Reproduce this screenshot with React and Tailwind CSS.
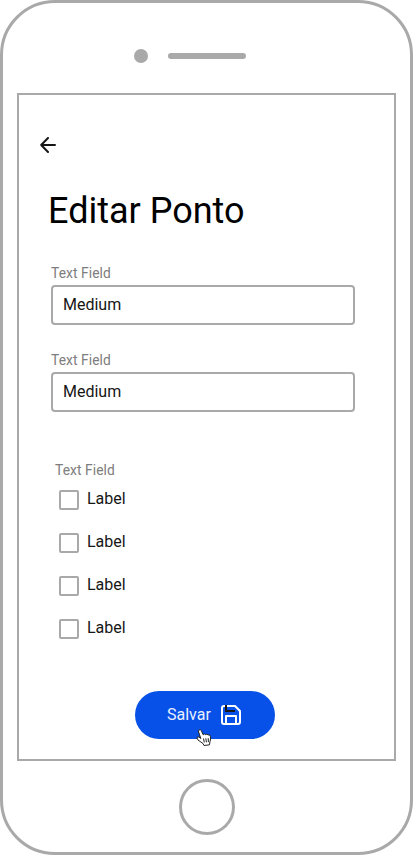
const Field = ({ label, value }) => (
  <div className="flex w-[304px] flex-col">
    <label className="h-5 text-[13.8px] leading-[21px] tracking-[0.080px] text-[#7d7d7d]">{label}</label>
    <div className="mt-[2px] flex h-10 items-center rounded-[4px] border-2 border-[#a9a9a9] pl-[10px] text-base text-[#161616]">
      {value}
    </div>
  </div>
);

const CheckRow = () => (
  <label className="flex h-5 items-center text-base text-[#161616]">
    <span className="h-5 w-5 rounded-[2px] border-2 border-[#a9a9a9]" />
    <span className="relative -top-px ml-2 leading-5">Label</span>
  </label>
);

const SaveIcon = () => (
  <svg className="absolute left-[86px] top-[14px] h-5 w-5" viewBox="0 0 20 20" fill="none" strokeWidth="2" strokeLinejoin="round">
    <path d="M1 3a2 2 0 0 1 2-2h11l5 5v11a2 2 0 0 1-2 2H3a2 2 0 0 1-2-2z" stroke="#fff" />
    <path d="M5 19v-8h10v8" stroke="#fff" />
    <path d="M5 0v6h9" stroke="#161616" strokeLinejoin="miter" />
  </svg>
);

const HandCursor = () => (
  <svg className="absolute left-[61px] top-[38px] h-[17px] w-4" viewBox="0 0 16 17" fill="#fff" stroke="#222" strokeLinejoin="round">
    <path d="M3 1Q4.500 0 5.400 1.800L7.200 5.800Q8.500 4.300 9.600 5.600Q11 4.500 12 5.900Q14 5.200 14.400 7.500Q15 10 14 12.500L13.500 15.800L8 16.500L7 14.500L2 11Q.5 9 1.500 8Q2.700 7.300 4.800 9.500L2.600 3Q2 1.800 3 1Z" />
    <path d="M7.500 9.500l.8 4M9.800 9.300l.6 4M12.200 9.200l.2 4" />
  </svg>
);

export default function App() {
  return (
    <div className="flex h-[855px] w-[413px] flex-col items-start rounded-[55px] border-[3px] border-[#a9a9a9] bg-white font-['Roboto',sans-serif] text-black">
      <div className="ml-[131px] mt-[46px] flex h-[14px] items-center">
        <span className="h-[14px] w-[14px] rounded-full bg-[#a9a9a9]" />
        <span className="ml-5 h-[6px] w-[78px] rounded-full bg-[#a9a9a9]" />
      </div>
      <main className="ml-[14px] mt-[30px] flex h-[668px] w-[379px] flex-col items-start border-2 border-[#a9a9a9]">
        <button aria-label="Voltar" className="ml-[21px] mt-[42px] h-4 w-4">
          <svg className="h-4 w-4" viewBox="0 0 16 16" fill="none" stroke="#161616" strokeWidth="2" strokeLinecap="round" strokeLinejoin="round">
            <path d="M15 8H1.200M8 1 1.200 8 8 15" />
          </svg>
        </button>
        <h1 className="ml-[29px] mt-[37px] whitespace-nowrap text-[36px] leading-[42px]">Editar Ponto</h1>
        <div className="ml-8 mt-[31px] flex flex-col gap-[25px]">
          <Field label="Text Field" value="Medium" />
          <Field label="Text Field" value="Medium" />
        </div>
        <div className="ml-9 mt-12 h-5 text-[13.8px] leading-[21px] tracking-[0.080px] text-[#7d7d7d]">Text Field</div>
        <div className="ml-10 mt-[10px] flex flex-col gap-[23px]">
          <CheckRow />
          <CheckRow />
          <CheckRow />
          <CheckRow />
        </div>
        <button className="relative ml-[116px] mt-[52px] flex h-12 w-[140px] items-center rounded-full bg-[#0750e8] pl-8 text-base text-[#e8f0ff]">
          <span>Salvar</span>
          <SaveIcon />
          <HandCursor />
        </button>
      </main>
      <div className="ml-[176px] mt-[18px] h-14 w-14 shrink-0 rounded-full border-[3px] border-[#a9a9a9]" />
    </div>
  );
}
